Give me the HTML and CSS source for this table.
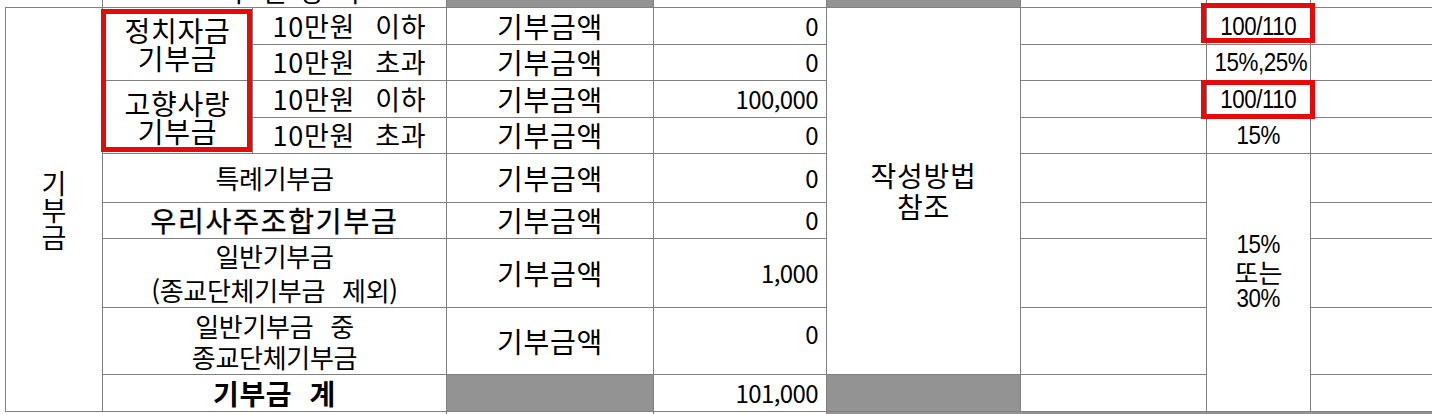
FILE: index.html
```html
<!DOCTYPE html>
<html lang="ko">
<head>
	<meta charset="utf-8">
	<title>기부금 공제</title>
	<link rel="stylesheet" href="styles.css">
</head>
<body>

	<div class="sheet">
		<table class="grid">
			<colgroup>
				<col class="c-a"><col class="c-b"><col class="c-c"><col class="c-d"><col class="c-e">
				<col class="c-f"><col class="c-g"><col class="c-h"><col class="c-i">
			</colgroup>

			<!-- row cut off by the top edge -->
			<tr class="r-cut">
				<td class="no-left"></td>
				<td colspan="2"><div class="peek"><span>구 분 항 목</span></div></td>
				<td class="shade"></td>
				<td></td>
				<td class="shade"></td>
				<td></td>
				<td></td>
				<td class="no-right"></td>
			</tr>

			<tr class="r-37">
				<td rowspan="9" class="vert">기<br>부<br>금</td>
				<td rowspan="2" class="group">정치자금<br>기부금</td>
				<td class="band">10만원 이하</td>
				<td class="kind">기부금액</td>
				<td class="amt">0</td>
				<td rowspan="8" class="ref">작성방법<br>참조</td>
				<td></td>
				<td class="rate"><span class="narrow">100/110</span></td>
				<td class="no-right"></td>
			</tr>
			<tr class="r-36">
				<td class="band">10만원 초과</td>
				<td class="kind">기부금액</td>
				<td class="amt">0</td>
				<td></td>
				<td class="rate"><span class="narrow">15%,25%</span></td>
				<td class="no-right"></td>
			</tr>
			<tr class="r-37">
				<td rowspan="2" class="group">고향사랑<br>기부금</td>
				<td class="band">10만원 이하</td>
				<td class="kind">기부금액</td>
				<td class="amt">100,000</td>
				<td></td>
				<td class="rate"><span class="narrow">100/110</span></td>
				<td class="no-right"></td>
			</tr>
			<tr class="r-36">
				<td class="band">10만원 초과</td>
				<td class="kind">기부금액</td>
				<td class="amt">0</td>
				<td></td>
				<td class="rate"><span class="narrow">15%</span></td>
				<td class="no-right"></td>
			</tr>

			<tr class="r-49">
				<td colspan="2" class="name">특례기부금</td>
				<td class="kind">기부금액</td>
				<td class="amt">0</td>
				<td></td>
				<td rowspan="5" class="rate rate-tall">
					<span class="line"><span class="narrow">15%</span></span>
					<span class="line">또는</span>
					<span class="line"><span class="narrow">30%</span></span>
				</td>
				<td class="no-right"></td>
			</tr>
			<tr class="r-36">
				<td colspan="2" class="name name-strong">우리사주조합기부금</td>
				<td class="kind">기부금액</td>
				<td class="amt">0</td>
				<td></td>
				<td class="no-right"></td>
			</tr>
			<tr class="r-67">
				<td colspan="2" class="name name-wide">일반기부금<br>(종교단체기부금 제외)</td>
				<td class="kind">기부금액</td>
				<td class="amt">1,000</td>
				<td></td>
				<td class="no-right"></td>
			</tr>
			<tr class="r-67">
				<td colspan="2" class="name name-two">일반기부금 중<br>종교단체기부금</td>
				<td class="kind">기부금액</td>
				<td class="amt amt-high">0</td>
				<td></td>
				<td class="no-right"></td>
			</tr>
			<tr class="r-37">
				<td colspan="2" class="total">기부금 계</td>
				<td class="shade"></td>
				<td class="amt">101,000</td>
				<td class="shade"></td>
				<td></td>
				<td class="no-right"></td>
			</tr>

			<!-- row cut off by the bottom edge -->
			<tr class="r-cut">
				<td colspan="3" class="no-left"></td>
				<td></td>
				<td></td>
				<td colspan="2" class="shade"></td>
				<td colspan="2" class="shade no-right"></td>
			</tr>
		</table>

		<!-- red highlight boxes -->
		<div class="mark mark-group"></div>
		<div class="mark mark-rate-top"></div>
		<div class="mark mark-rate-mid"></div>
	</div>

</body>
</html>
```

FILE: styles.css
```css
* {
	box-sizing: border-box;
}

body {
	margin: 0;
	background: #fff;
	color: #000;
	font-family: "Noto Sans CJK KR", "Noto Sans", sans-serif;
	overflow: hidden;
}

.sheet {
	position: relative;
	width: 1438px;
	height: 414px;
	overflow: hidden;
	padding-left: 5px;
}

.grid {
	border-collapse: collapse;
	table-layout: fixed;
	width: 1426px;
	font-size: 27px;
}

.grid td {
	border: 1px solid #808080;
	padding: 0;
	text-align: center;
	vertical-align: middle;
	line-height: 28px;
	white-space: nowrap;
}

.c-a { width: 97px; }
.c-b { width: 150px; }
.c-c { width: 194px; }
.c-d { width: 207px; }
.c-e { width: 173px; }
.c-f { width: 194px; }
.c-g { width: 186px; }
.c-h { width: 104px; }
.c-i { width: 121px; }

.r-cut { height: 7px; }
.r-cut td { border-top: none; }
.r-36 { height: 36px; }
.r-37 { height: 37px; }
.r-49 { height: 49px; }
.r-67 { height: 67px; }

.grid td.no-left { border-left: none; }
.grid td.no-right { border-right: none; }

.grid td.shade {
	background: #939393;
}

.peek {
	height: 6px;
	overflow: hidden;
}

.peek span {
	display: block;
	margin-top: -22px;
	line-height: 26px;
	padding-left: 40px;
	letter-spacing: 2px;
}

/* left label, one syllable per line */
.vert {
	font-size: 27px;
	line-height: 27px !important;
}

.group {
	font-size: 28px;
	letter-spacing: 0.8px;
	line-height: 28px !important;
}

.band {
	letter-spacing: 0.7px;
	word-spacing: 12px;
}

.kind {
	font-size: 28px;
	letter-spacing: 0.8px;
}

.amt {
	font-size: 24px;
	letter-spacing: -0.6px;
	text-align: right !important;
	padding-right: 8px !important;
}

.amt-high {
	padding-bottom: 14px !important;
}

.ref {
	font-size: 28px;
	letter-spacing: 0.8px;
	line-height: 31px !important;
}

.name {
	font-size: 26px;
	letter-spacing: -0.3px;
}

.name-strong {
	font-size: 28px;
	letter-spacing: 1.8px;
	-webkit-text-stroke: 0.4px #000;
}

.name-wide {
	line-height: 34px !important;
	word-spacing: 10px;
}

.name-two {
	line-height: 31px !important;
	word-spacing: 10px;
}

.total {
	font-size: 28px;
	font-weight: bold;
	letter-spacing: 0.6px;
	word-spacing: 9px;
}

.rate {
	font-family: "Liberation Sans", Arial, sans-serif;
	font-size: 26px;
}

.narrow {
	display: inline-block;
	transform: scaleX(0.86);
	letter-spacing: -0.5px;
}

.rate-tall {
	padding-bottom: 22px !important;
}

.rate-tall .line {
	display: block;
	line-height: 27px;
}

.rate-tall .line:nth-child(2) {
	font-family: "Noto Sans CJK KR", sans-serif;
}

/* red boxes drawn over the grid */
.mark {
	position: absolute;
	border: 5px solid #e30b0b;
}

.mark-group {
	left: 101px;
	top: 9px;
	width: 151px;
	height: 143px;
}

.mark-rate-top {
	left: 1201px;
	top: 3px;
	width: 114px;
	height: 40px;
}

.mark-rate-mid {
	left: 1201px;
	top: 80px;
	width: 114px;
	height: 39px;
}
```
